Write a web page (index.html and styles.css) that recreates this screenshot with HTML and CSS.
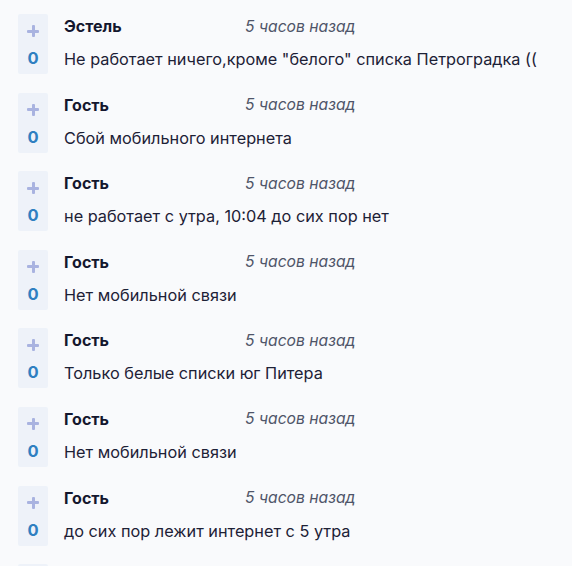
FILE: index.html
```html
<!DOCTYPE html>
<html lang="ru">
<head>
<meta charset="utf-8">
<link rel="stylesheet" href="styles.css">
</head>
<body>
<div class="list">
  <div class="item">
    <div class="vote"><span class="plus"></span><span class="count">0</span></div>
    <div class="body">
      <div class="meta"><span class="name">Эстель</span><span class="time">5 часов назад</span></div>
      <div class="text">Не работает ничего,кроме "белого" списка Петроградка ((</div>
    </div>
  </div>
  <div class="item">
    <div class="vote"><span class="plus"></span><span class="count">0</span></div>
    <div class="body">
      <div class="meta"><span class="name">Гость</span><span class="time">5 часов назад</span></div>
      <div class="text">Сбой мобильного интернета</div>
    </div>
  </div>
  <div class="item">
    <div class="vote"><span class="plus"></span><span class="count">0</span></div>
    <div class="body">
      <div class="meta"><span class="name">Гость</span><span class="time">5 часов назад</span></div>
      <div class="text">не работает с утра, 10:04 до сих пор нет</div>
    </div>
  </div>
  <div class="item">
    <div class="vote"><span class="plus"></span><span class="count">0</span></div>
    <div class="body">
      <div class="meta"><span class="name">Гость</span><span class="time">5 часов назад</span></div>
      <div class="text">Нет мобильной связи</div>
    </div>
  </div>
  <div class="item">
    <div class="vote"><span class="plus"></span><span class="count">0</span></div>
    <div class="body">
      <div class="meta"><span class="name">Гость</span><span class="time">5 часов назад</span></div>
      <div class="text">Только белые списки юг Питера</div>
    </div>
  </div>
  <div class="item">
    <div class="vote"><span class="plus"></span><span class="count">0</span></div>
    <div class="body">
      <div class="meta"><span class="name">Гость</span><span class="time">5 часов назад</span></div>
      <div class="text">Нет мобильной связи</div>
    </div>
  </div>
  <div class="item">
    <div class="vote"><span class="plus"></span><span class="count">0</span></div>
    <div class="body">
      <div class="meta"><span class="name">Гость</span><span class="time">5 часов назад</span></div>
      <div class="text">до сих пор лежит интернет с 5 утра</div>
    </div>
  </div>
  <div class="item">
    <div class="vote"></div>
  </div>
</div>
</body>
</html>
```
FILE: styles.css
```css
html, body {
  margin: 0;
  padding: 0;
  background: #f9fafc;
  height: 100%;
  overflow: hidden;
}
body {
  font-family: Inter, Roboto, "Liberation Sans", sans-serif;
  color: #1d2136;
}
.list {
  display: flex;
  flex-direction: column;
  gap: 18.6px;
  padding: 14px 0 0 18px;
}
.item {
  display: flex;
  gap: 16px;
  height: 60px;
  flex-shrink: 0;
}
.vote {
  width: 30px;
  height: 60px;
  background: #eef2f9;
  border-radius: 2px;
  display: flex;
  flex-direction: column;
  align-items: center;
  flex-shrink: 0;
}
.plus {
  position: relative;
  width: 12px;
  height: 12px;
  margin-top: 11px;
}
.plus::before, .plus::after {
  content: "";
  position: absolute;
  background: #a9b3e0;
  border-radius: 1px;
}
.plus::before {
  left: 0; top: 4.5px; width: 12px; height: 3px;
}
.plus::after {
  left: 4.5px; top: 0; width: 3px; height: 12px;
}
.count {
  margin-top: 12px;
  font-size: 16.5px;
  font-weight: 700;
  color: #2f7fc1;
  line-height: 18px;
}
.body {
  display: flex;
  flex-direction: column;
  padding-top: 2px;
}
.meta {
  display: flex;
  height: 20px;
  align-items: center;
}
.name {
  width: 181px;
  font-weight: 700;
  font-size: 16px;
  color: #14172e;
}
.time {
  font-style: italic;
  font-size: 15.7px;
  color: #4f5569;
}
.text {
  margin-top: 13px;
  font-size: 16.3px;
  line-height: 20px;
}
```
